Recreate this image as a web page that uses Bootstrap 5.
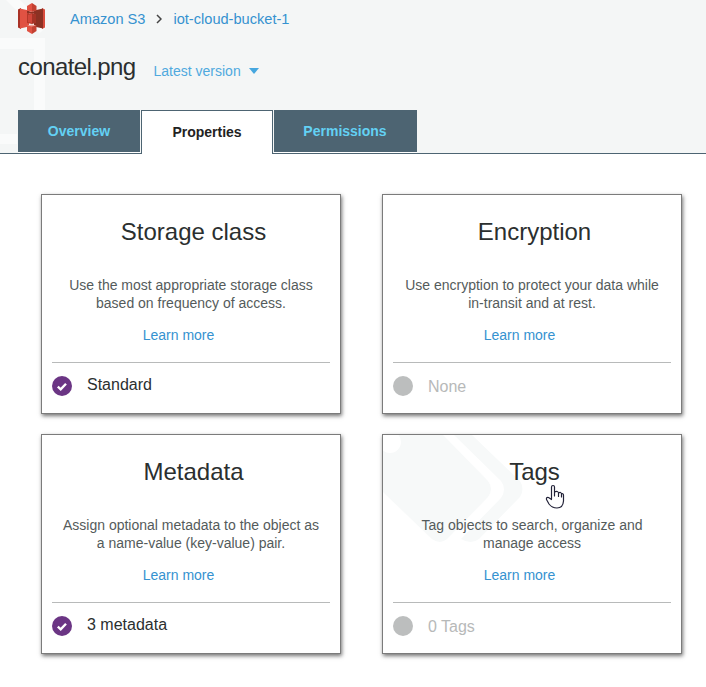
<!DOCTYPE html>
<html lang="en">
<head>
<meta charset="utf-8">
<meta name="viewport" content="width=device-width, initial-scale=1">
<title>conatel.png - Properties</title>
<link rel="stylesheet" href="https://cdn.jsdelivr.net/npm/bootstrap@5.3.0/dist/css/bootstrap.min.css">
<style>
body{font-family:"Liberation Sans",Arial,sans-serif;font-size:14px;line-height:18px;color:#2b2f2f;background:#fff}
a{color:#3592d0;text-decoration:none}
.page-head{height:154px;background:#f4f6f6;border-bottom:1px solid #4d6472}
.watermark{position:absolute;left:0;top:0}
.crumbs{height:37px;padding-left:18px;font-size:14.6px}
.logo{width:28px;height:32px;margin:1px 24px 0 0}
.chev{margin:0 11px 0 11px}
.title-row{height:73px;padding-left:18px}
.title-row h1{font-size:24px;letter-spacing:-.6px;line-height:28px;margin:16px 0 0}
.version{margin:25px 0 0 18px;color:#4fa9de}
.tabs{padding-left:18px;height:44px;font-weight:700}
.tabs a{height:42px;line-height:42px;background:#4d6472;color:#63d1f4;text-align:center;padding:0}
.tabs a.active{height:44px;line-height:43px;background:#fff;color:#222;border:1px solid #4d6472;border-bottom:0;width:132px;margin:0 1px}
.tabs .edge{border-bottom:1px solid #fff;box-sizing:content-box}
.w-over{width:122px}.w-perm{width:142px;padding-right:1px!important}
.tiles{display:grid;grid-template-columns:300px 300px;gap:20px 41px;padding:40px 0 20px 41px}
.tile{height:220px;border:1px solid #7b7b7b;border-radius:0;box-shadow:1px 2px 4px rgba(0,0,0,.55);padding:0 10px;background:#fff}
.tile h2{font-size:24px;line-height:28px;margin:23px 0 0;padding-left:5px}
.tile p{color:#545b5b;margin:30px 0 0;white-space:nowrap}
.tile .more{margin-top:14px;padding-right:25px}
.tile .state{border-top:1px solid #b8baba;margin-top:18px;font-size:16px;padding-top:13px}
.tile .state span{margin:0 0 0 15px}
.tile .off{color:#b7b9b9}
.tile .off span{margin-top:2px}
.tagmark{position:absolute;left:0;top:0}
.pointer{position:absolute;left:545px;top:484px}
</style>
<script src="https://cdn.jsdelivr.net/npm/bootstrap@5.3.0/dist/js/bootstrap.bundle.min.js"></script>
</head>
<body>
<header class="page-head position-relative">
  <svg class="watermark" width="60" height="153" fill="none" stroke="#fafbfb"><path d="M-2 43.500H39.500V153" stroke-width="11"/><path d="M5-8L43 30" stroke-width="10"/><path d="M0 139H17" stroke-width="10"/></svg>
  <div class="crumbs d-flex align-items-center position-relative">
    <svg class="logo" viewBox="0 0 28 32"><path d="M0 6.500L3 5V26L0 24.500Z" fill="#a93226"/><path d="M2 5.500L11 7.500V23.500L2 25.500Z" fill="#e05243"/><path d="M27 6.500L24 5V26L27 24.500Z" fill="#d94c3d"/><path d="M25 5.500L16 7.500V23.500L25 25.500Z" fill="#8c3123"/><path d="M9 7.500L14 9 18 7.500V10.500H9Z" fill="#8c3123"/><path d="M9 11L14 10V21L9 20Z" fill="#b4382a"/><path d="M10 12L14 11V20L10 19Z" fill="#d0463a"/><path d="M14 10L18 11V20L14 21Z" fill="#a63326"/><path d="M9 3L14 0V9L9 7.500Z" fill="#e05243"/><path d="M14 0L18.500 3V7.500L14 9Z" fill="#c44132"/><path d="M9 23L14 22V31L9 28Z" fill="#e05243"/><path d="M14 22L18.500 23V28L14 31Z" fill="#c44132"/><path d="M9 22.500L14 21.500 18.500 22.500 14 23.500Z" fill="#efa095"/></svg>
    <a href="#">Amazon S3</a>
    <svg class="chev" width="6" height="10" fill="none" stroke="#444" stroke-width="1.500"><path d="M1 1L5 5 1 9"/></svg>
    <a href="#">iot-cloud-bucket-1</a>
  </div>
  <div class="title-row d-flex align-items-start position-relative">
    <h1>conatel.png</h1>
    <a href="#" class="version d-flex align-items-center">Latest version<svg class="ms-2" width="10" height="6"><path d="M0 0H10L5 6Z" fill="#46a7df"/></svg></a>
  </div>
  <nav class="tabs d-flex position-relative">
    <a href="#" class="edge w-over">Overview</a><a href="#" class="active">Properties</a><a href="#" class="edge w-perm">Permissions</a>
  </nav>
</header>
<main class="tiles">
  <section class="card tile">
    <h2 class="text-center">Storage class</h2>
    <p class="text-center">Use the most appropriate storage class<br>based on frequency of access.</p>
    <a class="more text-center" href="#">Learn more</a>
    <div class="state d-flex align-items-start"><svg width="20" height="20"><circle cx="10" cy="10" r="10" fill="#6b3584"/><path d="M5.800 10.700L8.700 13.300 14 7.700" fill="none" stroke="#fff" stroke-width="2.400"/></svg><span>Standard</span></div>
  </section>
  <section class="card tile">
    <h2 class="text-center">Encryption</h2>
    <p class="text-center">Use encryption to protect your data while<br>in-transit and at rest.</p>
    <a class="more text-center" href="#">Learn more</a>
    <div class="state off d-flex align-items-start"><svg width="20" height="20"><circle cx="10" cy="10" r="10" fill="#bcbebe"/></svg><span>None</span></div>
  </section>
  <section class="card tile">
    <h2 class="text-center">Metadata</h2>
    <p class="text-center">Assign optional metadata to the object as<br>a name-value (key-value) pair.</p>
    <a class="more text-center" href="#">Learn more</a>
    <div class="state d-flex align-items-start"><svg width="20" height="20"><circle cx="10" cy="10" r="10" fill="#6b3584"/><path d="M5.800 10.700L8.700 13.300 14 7.700" fill="none" stroke="#fff" stroke-width="2.400"/></svg><span>3 metadata</span></div>
  </section>
  <section class="card tile">
    <svg class="tagmark" width="150" height="115" fill="#f7f9f9"><path d="M0 0H60L105 46Q111 54 105 62L64 104Q57 110 49 104L0 57Z"/><path d="M71 0H89L137 46Q142 54 137 62L96 104Q88 110 78 104L118 63Q124 54 118 46Z"/><circle cx="7" cy="7" r="11" fill="#fff"/></svg>
    <h2 class="text-center position-relative">Tags</h2>
    <p class="text-center position-relative">Tag objects to search, organize and<br>manage access</p>
    <a class="more text-center" href="#">Learn more</a>
    <div class="state off d-flex align-items-start"><svg width="20" height="20"><circle cx="10" cy="10" r="10" fill="#bcbebe"/></svg><span>0 Tags</span></div>
  </section>
</main>
<svg class="pointer" width="20" height="26" fill="#fff" stroke="#222238" stroke-width="1.200" stroke-linejoin="round" stroke-linecap="round"><path d="M6.500 15V3Q6.500 1.500 8 1.500T9.500 3V8Q13 6.500 13.500 9Q16 7.500 16.500 10Q18.500 9 18.500 11.500V17Q18 24 12 24Q7 24 4 20L1.500 15.500Q1 13 3.500 13.500L6.500 15.500M9.500 8V12M13.500 9V12.500M16.500 10V13"/></svg>
</body>
</html>
